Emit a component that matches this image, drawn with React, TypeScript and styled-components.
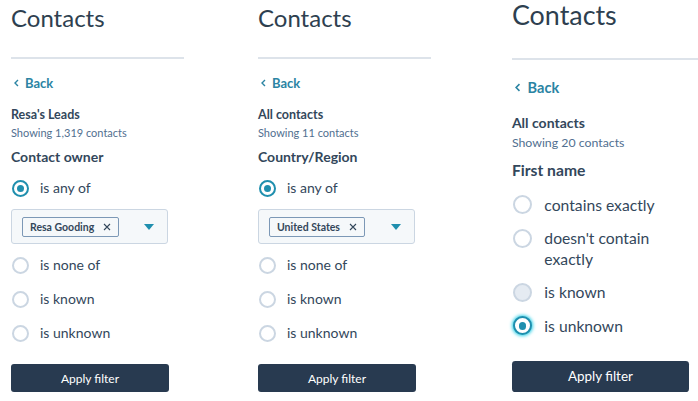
import React from 'react';
import styled, { createGlobalStyle } from 'styled-components';

interface Choice {
  label: string;
  checked?: boolean;
  hover?: boolean;
  focus?: boolean;
  tag?: string;
}

interface FilterPanel {
  list: string;
  count: string;
  property: string;
  choices: Choice[];
  zoom: number;
  gap: number;
}

const GlobalStyle = createGlobalStyle`
  body {
    margin: 0;
    background: #fff;
    font-family: Lato, "Open Sans", sans-serif;
    color: #33475b;
  }
`;

const Page = styled.div`
  display: flex;
  width: 698px;
  height: 401px;
  overflow: hidden;
`;

// the third panel is shown a little larger, as in the reference
const Panel = styled.section<{ $zoom: number }>`
  flex: none;
  width: 236px;
  padding-left: ${({ $zoom }) => ($zoom > 1 ? '16px' : '11px')};
  zoom: ${({ $zoom }) => $zoom};
  margin-top: ${({ $zoom }) => ($zoom > 1 ? '-5px' : '0')};
  display: flex;
  flex-direction: column;
`;

const Title = styled.h1`
  margin: 3px 0 0;
  font-size: 24px;
  line-height: 30px;
  font-weight: 400;
  color: #2e3f50;
`;

const Divider = styled.hr`
  margin: 24px 0 0;
  width: 173px;
  height: 2px;
  border: none;
  background: #dde3ea;
`;

const BackLink = styled.a`
  margin-top: 14px;
  display: flex;
  align-items: center;
  gap: 6px;
  height: 20px;
  padding-left: 3px;
  font-size: 13px;
  font-weight: 700;
  color: #2b84a3;
  text-decoration: none;
`;

const ListName = styled.div`
  margin-top: 14px;
  font-size: 12.5px;
  line-height: 16px;
  font-weight: 700;
`;

const Count = styled.div`
  margin-top: 3px;
  font-size: 11px;
  line-height: 14px;
  color: #516f90;
`;

const Property = styled.div`
  margin-top: 7px;
  font-size: 14px;
  line-height: 20px;
  font-weight: 700;
`;

const Options = styled.div<{ $gap: number }>`
  margin-top: 10px;
  width: 157px;
  display: flex;
  flex-direction: column;
  gap: ${({ $gap }) => $gap}px;
`;

const Option = styled.label`
  display: flex;
  align-items: flex-start;
  gap: 11px;
  font-size: 14px;
`;

const Radio = styled.span<{ $checked?: boolean; $hover?: boolean; $focus?: boolean }>`
  flex: none;
  box-sizing: border-box;
  width: 17px;
  height: 17px;
  margin: 2.5px 0 0 1px;
  border-radius: 50%;
  border: 2px solid ${({ $checked }) => ($checked ? '#1f8fae' : '#cbd6e2')};
  background: ${({ $hover }) => ($hover ? '#e5ebf2' : '#fff')};
  box-shadow: ${({ $focus }) => ($focus ? '0 0 3px 1px #3fd3e8' : 'none')};
  display: flex;
  align-items: center;
  justify-content: center;
  &::after {
    content: '';
    display: ${({ $checked }) => ($checked ? 'block' : 'none')};
    width: 7px;
    height: 7px;
    border-radius: 50%;
    background: #1f8fae;
  }
`;

const OptionText = styled.span`
  padding: 2px 0;
  line-height: 18px;
  color: #33475b;
`;

const Select = styled.div`
  margin: -2px 0;
  box-sizing: border-box;
  height: 35px;
  padding: 0 13px 0 10px;
  display: flex;
  align-items: center;
  justify-content: space-between;
  background: #f5f8fa;
  border: 1px solid #cbd6e2;
  border-radius: 3px;
`;

const Tag = styled.span`
  box-sizing: border-box;
  height: 20px;
  padding: 0 7px;
  display: flex;
  align-items: center;
  gap: 9px;
  background: #f5f8fa;
  border: 1px solid #7c98b6;
  border-radius: 2px;
  font-size: 10.5px;
  font-weight: 700;
  color: #33475b;
`;

const ApplyButton = styled.button`
  margin-top: 20px;
  width: 158px;
  height: 28px;
  border: none;
  border-radius: 3px;
  background: #283a50;
  color: #fff;
  font-family: Lato, "Open Sans", sans-serif;
  font-size: 12px;
  cursor: pointer;
`;

const Chevron = () => (
  <svg width="5" height="8" viewBox="0 0 5 8">
    <path d="M4 1 L1 4 L4 7" fill="none" stroke="#2b84a3" strokeWidth="1.4" />
  </svg>
);

const Cross = () => (
  <svg width="8" height="8" viewBox="0 0 8 8">
    <path d="M1 1 L7 7 M7 1 L1 7" stroke="#33475b" strokeWidth="1.1" />
  </svg>
);

const Caret = () => (
  <svg width="10" height="6" viewBox="0 0 10 6">
    <path d="M0 0 H10 L5 6 Z" fill="#1f8fae" />
  </svg>
);

const anyOf = (tag: string): Choice[] => [
  { label: 'is any of', checked: true, tag },
  { label: 'is none of' },
  { label: 'is known' },
  { label: 'is unknown' },
];

const panels: FilterPanel[] = [
  {
    list: "Resa's Leads",
    count: 'Showing 1,319 contacts',
    property: 'Contact owner',
    choices: anyOf('Resa Gooding'),
    zoom: 1,
    gap: 12,
  },
  {
    list: 'All contacts',
    count: 'Showing 11 contacts',
    property: 'Country/Region',
    choices: anyOf('United States'),
    zoom: 1,
    gap: 12,
  },
  {
    list: 'All contacts',
    count: 'Showing 20 contacts',
    property: 'First name',
    choices: [
      { label: 'contains exactly' },
      { label: "doesn't contain exactly" },
      { label: 'is known', hover: true },
      { label: 'is unknown', checked: true, focus: true },
    ],
    zoom: 1.12,
    gap: 8,
  },
];

const App = () => {
  return (
    <>
      <GlobalStyle />
      <Page>
        {panels.map((p, i) => (
          <Panel key={i} $zoom={p.zoom}>
            <Title>Contacts</Title>
            <Divider />
            <BackLink href="#">
              <Chevron />
              Back
            </BackLink>
            <ListName>{p.list}</ListName>
            <Count>{p.count}</Count>
            <Property>{p.property}</Property>
            <Options $gap={p.gap}>
              {p.choices.map((c) => (
                <React.Fragment key={c.label}>
                  <Option>
                    <Radio $checked={c.checked} $hover={c.hover} $focus={c.focus} />
                    <OptionText>{c.label}</OptionText>
                  </Option>
                  {c.tag && (
                    <Select>
                      <Tag>
                        {c.tag}
                        <Cross />
                      </Tag>
                      <Caret />
                    </Select>
                  )}
                </React.Fragment>
              ))}
            </Options>
            <ApplyButton>Apply filter</ApplyButton>
          </Panel>
        ))}
      </Page>
    </>
  );
};

export default App;
